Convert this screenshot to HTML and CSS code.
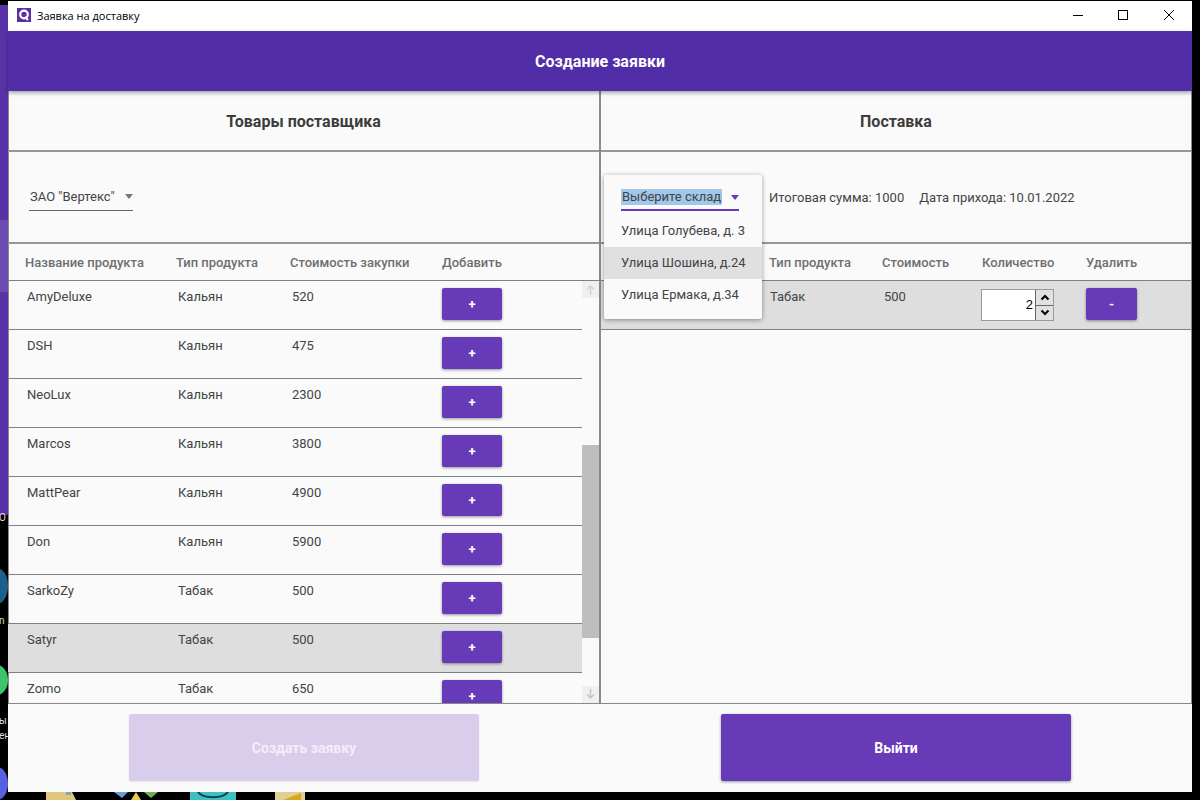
FILE: index.html
```html
<!DOCTYPE html>
<html>
<head>
  <title>Заявка на доставку</title>
  <link rel="stylesheet" href="styles.css">
</head>
<body>
  <div class="desktop">
    <div class="wall-purple"></div>
    <div class="wall-light"></div>
    <div class="wall-blue"></div>
    <div class="wall-green"></div>
    <div class="wall-indigo"></div>
    <span class="wall-text t1">О</span>
    <span class="wall-text t2">n</span>
    <span class="wall-text t3">ы</span>
    <span class="wall-text t4">ен</span>
    <svg class="dock d1" width="30" height="8" viewBox="0 0 30 8">
      <path d="M0 0h26l4 8H0z" fill="#e0c77c"/>
      <rect x="20" y="0" width="5" height="3" fill="#7fa6c8"/>
    </svg>
    <svg class="dock d2" width="44" height="8" viewBox="0 0 44 8">
      <path d="M0 0h14l-6 6z" fill="#6f9ad8"/>
      <path d="M30 0h14l-7 6z" fill="#6fb04f"/>
      <path d="M22 0l5 8H17z" fill="#e8c84a"/>
    </svg>
    <svg class="dock d3" width="46" height="8" viewBox="0 0 46 8">
      <rect width="46" height="8" fill="#3cc0c4"/>
      <path d="M8 0c5 7 25 7 30 0" fill="none" stroke="#143c48" stroke-width="2"/>
    </svg>
    <svg class="dock d4" width="30" height="8" viewBox="0 0 30 8">
      <rect width="30" height="8" fill="#e0cf96"/>
      <path d="M8 8L26 1v7z" fill="#d8a81c"/>
    </svg>
  </div>

  <div class="window">
    <div class="titlebar">
      <div class="title-left">
        <svg class="app-icon" width="14" height="14" viewBox="0 0 14 14">
          <rect width="14" height="14" fill="#5a2ea6"/>
          <circle cx="7" cy="6.500" r="3.800" fill="none" stroke="#fff" stroke-width="2.200"/>
          <path d="M8 9l3 3" stroke="#fff" stroke-width="2"/>
        </svg>
        <span>Заявка на доставку</span>
      </div>
      <div class="win-buttons">
        <svg width="10" height="10" viewBox="0 0 10 10"><path d="M0 5.500h10" stroke="#000" stroke-width="1"/></svg>
        <svg width="10" height="10" viewBox="0 0 10 10"><rect x="0.500" y="0.500" width="9" height="9" fill="none" stroke="#000"/></svg>
        <svg class="win-close" width="10" height="10" viewBox="0 0 10 10"><path d="M0 0l10 10M10 0L0 10" stroke="#000" stroke-width="1"/></svg>
      </div>
    </div>

    <header class="app-header">Создание заявки</header>

    <div class="panels">
      <section class="panel panel-left">
        <h2 class="panel-title">Товары поставщика</h2>
        <div class="toolbar">
          <div class="combo supplier">
            <span>ЗАО "Вертекс"</span>
            <i class="caret"></i>
          </div>
        </div>
        <div class="table-wrap">
          <div class="row head">
            <span class="c-name">Название продукта</span>
            <span class="c-type">Тип продукта</span>
            <span class="c-cost">Стоимость закупки</span>
            <span>Добавить</span>
          </div>
          <div class="table-body">
            <div class="rows">
              <div class="row item"><span class="c-name">AmyDeluxe</span><span class="c-type">Кальян</span><span class="c-cost">520</span><button class="btn-small">+</button></div>
              <div class="row item"><span class="c-name">DSH</span><span class="c-type">Кальян</span><span class="c-cost">475</span><button class="btn-small">+</button></div>
              <div class="row item"><span class="c-name">NeoLux</span><span class="c-type">Кальян</span><span class="c-cost">2300</span><button class="btn-small">+</button></div>
              <div class="row item"><span class="c-name">Marcos</span><span class="c-type">Кальян</span><span class="c-cost">3800</span><button class="btn-small">+</button></div>
              <div class="row item"><span class="c-name">MattPear</span><span class="c-type">Кальян</span><span class="c-cost">4900</span><button class="btn-small">+</button></div>
              <div class="row item"><span class="c-name">Don</span><span class="c-type">Кальян</span><span class="c-cost">5900</span><button class="btn-small">+</button></div>
              <div class="row item"><span class="c-name">SarkoZy</span><span class="c-type">Табак</span><span class="c-cost">500</span><button class="btn-small">+</button></div>
              <div class="row item selected"><span class="c-name">Satyr</span><span class="c-type">Табак</span><span class="c-cost">500</span><button class="btn-small">+</button></div>
              <div class="row item"><span class="c-name">Zomo</span><span class="c-type">Табак</span><span class="c-cost">650</span><button class="btn-small">+</button></div>
            </div>
            <div class="scrollbar">
              <svg class="arrow" width="17" height="17" viewBox="0 0 17 17"><path d="M8.500 14V5M5 8.500L8.500 5 12 8.500" fill="none" stroke="#d4d4d4" stroke-width="1.500"/></svg>
              <div class="track"><div class="thumb"></div></div>
              <svg class="arrow" width="17" height="17" viewBox="0 0 17 17"><path d="M8.500 3v9M5 8.500L8.500 12 12 8.500" fill="none" stroke="#c4c4c4" stroke-width="1.500"/></svg>
            </div>
          </div>
        </div>
      </section>

      <section class="panel panel-right">
        <h2 class="panel-title">Поставка</h2>
        <div class="toolbar toolbar-right">
          <span>Итоговая сумма: 1000</span>
          <span>Дата прихода: 10.01.2022</span>
        </div>
        <div class="table-wrap">
          <div class="row head head-right">
            <span class="r-type">Тип продукта</span>
            <span class="r-cost">Стоимость</span>
            <span class="r-qty">Количество</span>
            <span>Удалить</span>
          </div>
          <div class="row item selected item-right">
            <span class="r-type">Табак</span>
            <span class="r-cost">500</span>
            <span class="r-qty">
              <span class="spinner">
                <span class="spin-value">2</span>
                <span class="spin-btns">
                  <span class="spin-btn"><svg width="10" height="7" viewBox="0 0 10 7"><path d="M1.500 5.500L5 2l3.500 3.500" fill="none" stroke="#000" stroke-width="2"/></svg></span>
                  <span class="spin-btn"><svg width="10" height="7" viewBox="0 0 10 7"><path d="M1.500 1.500L5 5l3.500-3.500" fill="none" stroke="#000" stroke-width="2"/></svg></span>
                </span>
              </span>
            </span>
            <button class="btn-small btn-remove">-</button>
          </div>
        </div>
      </section>

      <div class="dropdown">
        <div class="dropdown-head">
          <span class="selected-text">Выберите склад</span>
          <i class="caret caret-purple"></i>
        </div>
        <div class="option">Улица Голубева, д. 3</div>
        <div class="option hover">Улица Шошина, д.24</div>
        <div class="option">Улица Ермака, д.34</div>
      </div>
    </div>

    <footer class="actions">
      <button class="btn-big disabled">Создать заявку</button>
      <button class="btn-big">Выйти</button>
    </footer>
  </div>
</body>
</html>
```

FILE: styles.css
```css
/* Page and desktop behind the window */
body {
  margin: 0;
  width: 1200px;
  height: 800px;
  overflow: hidden;
  position: relative;
  background-color: #000;
  font-family: Roboto, "Liberation Sans", sans-serif;
  color: #444;
}

.desktop div,
.desktop span,
.desktop svg {
  position: absolute;
}

.wall-purple {
  left: 0;
  top: 5px;
  width: 8px;
  height: 510px;
  background-color: #5a32a8;
}

.wall-light {
  left: 0;
  top: 220px;
  width: 8px;
  height: 72px;
  background-color: #6c4cb2;
}

.wall-blue {
  left: -14px;
  top: 568px;
  width: 22px;
  height: 36px;
  border-radius: 50%;
  background-color: #1d5f8f;
}

.wall-green {
  left: -14px;
  top: 665px;
  width: 22px;
  height: 30px;
  border-radius: 50%;
  background-color: #3fc46b;
}

.wall-indigo {
  left: -14px;
  top: 767px;
  width: 22px;
  height: 33px;
  border-radius: 50%;
  background-color: #5660e0;
}

.wall-text {
  left: -1px;
  font-size: 10px;
  color: #ddd;
}

.t1 { top: 512px; }
.t2 { top: 615px; }
.t3 { top: 715px; }
.t4 { top: 730px; }

.dock { top: 792px; }
.d1 { left: 46px; }
.d2 { left: 114px; }
.d3 { left: 190px; }
.d4 { left: 275px; }

/* Application window */
.window {
  position: absolute;
  left: 8px;
  top: 1px;
  width: 1184px;
  height: 791px;
  background-color: #fafafa;
  display: flex;
  flex-direction: column;
}

.titlebar {
  height: 30px;
  padding-bottom: 2px;
  box-sizing: border-box;
  background-color: #fff;
  display: flex;
  justify-content: space-between;
  align-items: center;
  font-family: "Open Sans", "Liberation Sans", sans-serif;
  font-size: 11px;
  color: #000;
}

.title-left {
  display: flex;
  align-items: center;
  gap: 6px;
  padding-left: 9px;
}

.win-buttons {
  display: flex;
  gap: 35px;
  padding-right: 18px;
}

.win-close {
  margin-left: 1px;
}

.app-header {
  height: 60px;
  padding-top: 1px;
  box-sizing: border-box;
  flex: none;
  background-color: #512da8;
  color: #fff;
  font-size: 16px;
  font-weight: 700;
  display: flex;
  align-items: center;
  justify-content: center;
  box-shadow: 0 2px 4px rgba(0, 0, 0, 0.35);
  position: relative;
  z-index: 2;
}

/* Two panels */
.panels {
  height: 613px;
  flex: none;
  display: flex;
  position: relative;
  border-bottom: 1px solid #8a8a8a;
  box-sizing: border-box;
}

.panel {
  display: flex;
  flex-direction: column;
  box-sizing: border-box;
}

.panel-left {
  width: 593px;
  border-right: 2px solid #8a8a8a;
  box-shadow: inset 1px 0 0 #8a8a8a;
}

.panel-right {
  flex: 1;
  border-right: 1px solid #8a8a8a;
}

.panel-title {
  margin: 0;
  height: 61px;
  padding-top: 1px;
  box-sizing: border-box;
  flex: none;
  font-size: 16px;
  font-weight: 700;
  color: #3c3c3c;
  display: flex;
  align-items: center;
  justify-content: center;
  border-bottom: 2px solid #969696;
}

.toolbar {
  height: 92px;
  flex: none;
  display: flex;
  align-items: center;
  padding-left: 21px;
  box-sizing: border-box;
  border-bottom: 2px solid #969696;
  font-size: 13px;
}

.toolbar-right {
  padding-left: 168px;
  gap: 15px;
  color: #444;
}

.combo {
  width: 104px;
  height: 26px;
  margin-top: 2px;
  display: flex;
  justify-content: space-between;
  align-items: center;
  border-bottom: 1px solid #666;
  font-size: 13px;
  box-sizing: border-box;
  padding: 0 0 2px 1px;
}

.caret {
  width: 0;
  height: 0;
  border-left: 4.500px solid transparent;
  border-right: 4.500px solid transparent;
  border-top: 5px solid #777;
}

.caret-purple {
  border-top-color: #673ab7;
}

/* Tables */
.table-wrap {
  flex: 1;
  min-height: 0;
  display: flex;
  flex-direction: column;
  overflow: hidden;
}

.row {
  display: flex;
  font-size: 13px;
  box-sizing: border-box;
}

.head {
  height: 37px;
  flex: none;
  align-items: center;
  font-weight: 500;
  color: #6f6f6f;
  border-bottom: 1px solid #808080;
  padding-left: 17px;
}

.c-name { width: 151px; }
.c-type { width: 114px; }
.c-cost { width: 152px; }

.table-body {
  flex: 1;
  min-height: 0;
  display: flex;
}

.rows {
  width: 574px;
  flex: none;
  overflow: hidden;
}

.item {
  height: 49px;
  padding: 8px 0 0 19px;
  border-bottom: 1px solid #808080;
  color: #444;
}

.item .c-name {
  width: 150px;
}

.item .c-type {
  padding-left: 1px;
  box-sizing: border-box;
}

.item .c-cost {
  width: 151px;
  padding-left: 1px;
  box-sizing: border-box;
}

.selected {
  background-color: #dedede;
}

.btn-small {
  width: 60px;
  height: 32px;
  margin-top: -1px;
  border: none;
  border-radius: 2px;
  background-color: #673ab7;
  color: #fff;
  font-family: inherit;
  font-size: 13px;
  font-weight: 700;
  padding: 0;
  box-shadow: 0 1px 3px rgba(0, 0, 0, 0.4);
}

.scrollbar {
  width: 17px;
  display: flex;
  flex-direction: column;
  background-color: #fafafa;
}

.arrow {
  flex: none;
  background-color: #f0f0f0;
}

.track {
  flex: 1;
  padding-top: 147px;
  display: flex;
  flex-direction: column;
}

.thumb {
  height: 193px;
  background-color: #bebebe;
}

/* Right table */
.head-right {
  padding-left: 168px;
}

.r-type { width: 113px; }
.r-cost { width: 100px; }
.r-qty { width: 104px; }

.item-right {
  padding-left: 169px;
}

.item-right .r-type { width: 114px; }
.item-right .r-cost { width: 97px; }
.item-right .r-qty { width: 105px; }

.spinner {
  display: flex;
  width: 73px;
  height: 32px;
  border: 1px solid #9a9a9a;
  box-sizing: border-box;
  background-color: #fff;
  font-family: "Liberation Sans", sans-serif;
  font-size: 13px;
  color: #000;
}

.spin-value {
  flex: 1;
  text-align: right;
  padding: 7px 2px 0 0;
}

.spin-btns {
  width: 17px;
  display: flex;
  flex-direction: column;
  gap: 1px;
  background-color: #666;
  border-left: 1px solid #666;
}

.spin-btn {
  flex: 1;
  background-color: #e1e1e1;
  display: flex;
  align-items: center;
  justify-content: center;
}

.btn-remove {
  width: 51px;
}

/* Opened warehouse list */
.dropdown {
  position: absolute;
  left: 596px;
  top: 84px;
  width: 158px;
  height: 144px;
  background-color: #fafafa;
  box-shadow: 0 1px 5px rgba(0, 0, 0, 0.4);
  border-radius: 2px;
  font-size: 13px;
  color: #444;
  z-index: 3;
}

.dropdown-head {
  margin: 14px 23px 0 17px;
  height: 20px;
  display: flex;
  justify-content: space-between;
  border-bottom: 2px solid #673ab7;
}

.selected-text {
  height: 16px;
  line-height: 16px;
  background-color: #9fc8ea;
  color: #444;
  padding: 0 1px;
}

.caret-purple {
  margin-top: 6px;
}

.option {
  height: 32px;
  line-height: 32px;
  padding-left: 17px;
}

.dropdown-head + .option {
  margin-top: 4px;
}

.option.hover {
  background-color: #e0e0e0;
}

/* Bottom buttons */
.actions {
  flex: 1;
  display: flex;
  padding: 10px 0 0 121px;
  gap: 242px;
}

.btn-big {
  width: 350px;
  height: 67px;
  border: none;
  border-radius: 2px;
  background-color: #673ab7;
  color: #fff;
  font-family: inherit;
  font-size: 14px;
  font-weight: 700;
  box-shadow: 0 1px 3px rgba(0, 0, 0, 0.4);
}

.btn-big.disabled {
  background-color: #d9cdec;
  color: #f3eef9;
  box-shadow: 0 1px 2px rgba(0, 0, 0, 0.08);
}
```
